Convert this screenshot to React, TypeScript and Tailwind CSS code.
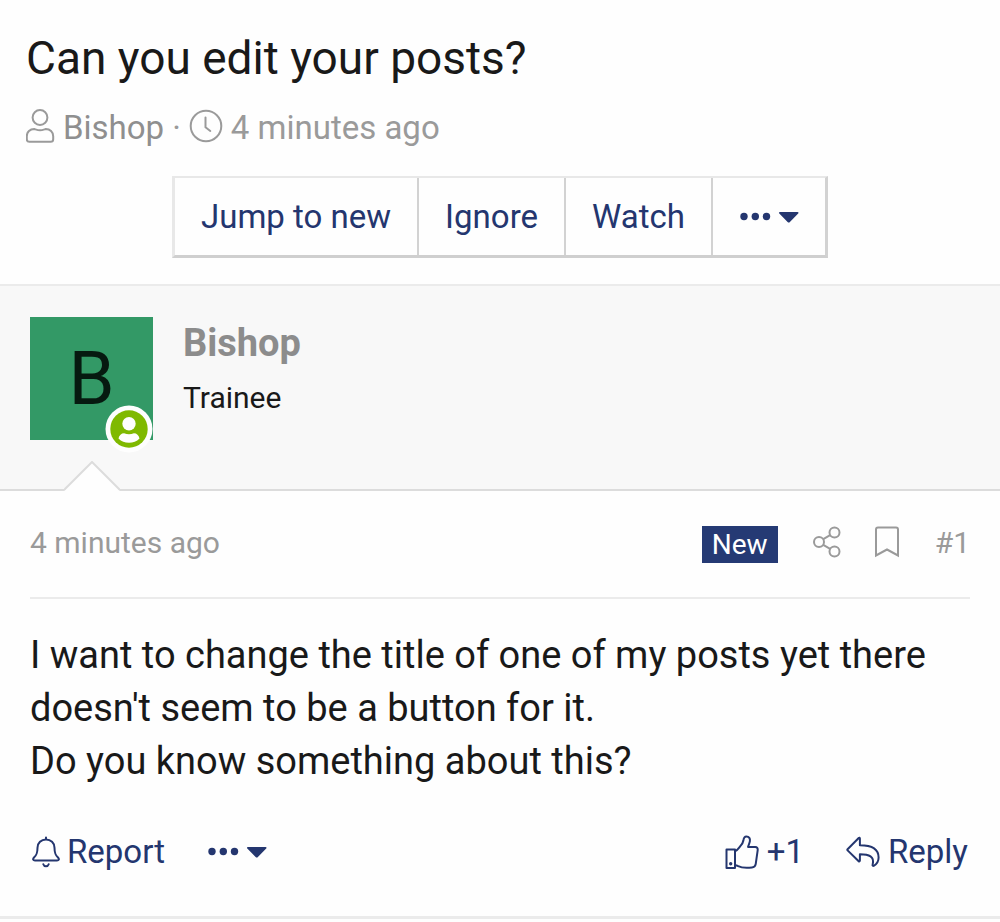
import React from 'react';

type IconProps = { className?: string };

function UserIcon({ className }: IconProps) {
  return (
    <svg className={className} viewBox="0 0 29 35" fill="none" stroke="currentColor" strokeWidth="2" aria-hidden="true">
      <circle cx="14" cy="8.500" r="7.400" />
      <path d="M8.200 20c2 .6 3.600 1.300 5.800 1.300s3.800-.7 5.800-1.300c4.200 0 7.400 3 7.400 7.200v3.100c0 1.500-1 2.500-2.500 2.500H3.300c-1.500 0-2.500-1-2.500-2.500v-3.100C.8 23 4 20 8.200 20z" />
    </svg>
  );
}

function ClockIcon({ className }: IconProps) {
  return (
    <svg className={className} viewBox="0 0 34 34" fill="none" stroke="currentColor" strokeWidth="2" aria-hidden="true">
      <circle cx="17" cy="17" r="15.300" />
      <path d="M16.500 8.500v9.800l4.800 3.700" strokeLinecap="round" strokeLinejoin="round" />
    </svg>
  );
}

function MoreIcon({ className }: IconProps) {
  return (
    <svg className={className} viewBox="0 0 60 14" fill="currentColor" aria-hidden="true">
      <circle cx="5" cy="6.500" r="3.700" />
      <circle cx="16.300" cy="6.500" r="3.700" />
      <circle cx="27.500" cy="6.500" r="3.700" />
      <path d="M41 2h17.500c1 0 1.400 .9 .7 1.600l-8.300 8.300c-.7 .7-1.600 .7-2.300 0l-8.300-8.300c-.7-.7-.3-1.600 .7-1.600z" />
    </svg>
  );
}

function OnlineIcon({ className }: IconProps) {
  return (
    <svg className={className} viewBox="0 0 48 48" aria-hidden="true">
      <circle cx="24" cy="24" r="23.500" fill="#fefefe" />
      <circle cx="24" cy="24" r="18.700" fill="#7fb900" />
      <circle cx="24" cy="18.800" r="6.700" fill="#fefefe" />
      <path d="M13.500 33.500c.7-3.300 2.800-5.300 5.600-5.300 1.600 .7 3.200 1 4.900 1s3.300-.3 4.900-1c2.800 0 4.900 2 5.600 5.300-2.800 3-6.400 4.300-10.500 4.300s-7.700-1.300-10.500-4.300z" fill="#fefefe" />
    </svg>
  );
}

function ShareIcon({ className }: IconProps) {
  return (
    <svg className={className} viewBox="0 0 30 32" fill="none" stroke="currentColor" strokeWidth="2" aria-hidden="true">
      <circle cx="7" cy="16" r="5" />
      <circle cx="22.500" cy="6.500" r="5" />
      <circle cx="22.500" cy="25.500" r="5" />
      <path d="M11.300 13.200l6.800-4M11.300 18.800l6.800 4" />
    </svg>
  );
}

function BookmarkIcon({ className }: IconProps) {
  return (
    <svg className={className} viewBox="0 0 24 32" fill="none" stroke="currentColor" strokeWidth="2" aria-hidden="true">
      <path d="M1 29.500V3.500C1 2.300 1.800 1.500 3 1.500h18c1.200 0 2 .8 2 2v26l-11-6z" />
    </svg>
  );
}

function BellIcon({ className }: IconProps) {
  return (
    <svg className={className} viewBox="0 0 28 32" fill="none" stroke="currentColor" strokeWidth="2" strokeLinecap="round" strokeLinejoin="round" aria-hidden="true">
      <path d="M14 1.600v1.800M14 3.400c-4.800 0-8.500 3.600-8.500 8.300 0 6-1.200 7.600-3.500 9.800-1.600 1.700-.8 3 1 3h22c1.800 0 2.600-1.300 1-3-2.300-2.200-3.500-3.800-3.500-9.800 0-4.700-3.700-8.300-8.500-8.300z" />
      <path d="M11.300 28.300c.4 1.300 1.400 2 2.700 2s2.300-.7 2.700-2" />
    </svg>
  );
}

function ThumbsUpIcon({ className }: IconProps) {
  return (
    <svg className={className} viewBox="0 0 34 35" fill="none" stroke="currentColor" strokeWidth="2" strokeLinejoin="round" aria-hidden="true">
      <path d="M1.500 14.500h8.500v18.500H1.500z" />
      <path d="M10 16.200c2.400-.6 3.700-3 5.300-5 1.700-1.900 2.700-3.300 3.100-5.700 .3-2.500 .9-4 3-4 2.800 0 3.900 2 3.500 4.700-.3 2.200-1.400 3.700-1.900 5.700h7.300c1.700 0 2.700 1.500 2.400 3.200l-2 14c-.4 2.200-1.500 3.300-3.700 3.300-6.400 .700-11 .200-13.800-1.300-1-.6-2-.9-3.200-.9" />
      <circle cx="5.700" cy="28.700" r=".7" fill="currentColor" />
    </svg>
  );
}

function ReplyIcon({ className }: IconProps) {
  return (
    <svg className={className} viewBox="0 0 34 32" fill="none" stroke="currentColor" strokeWidth="2" strokeLinejoin="round" aria-hidden="true">
      <path d="M1.600 13.200L12.700 2c.5-.5 1.200-.3 1.200 .6v6.600c10.700 0 18.700 3.300 18.700 12.300 0 3.200-1.700 6.300-4.600 8.300-.9 .6-1.700-.1-1.400-1.100 2.300-8.300-3.600-10.300-12.700-10.400v6.300c0 .9-.7 1.100-1.200 .6L1.600 14.400c-.4-.4-.4-.8 0-1.200z" />
    </svg>
  );
}

const threadActions = ['Jump to new', 'Ignore', 'Watch'];

export default function App() {
  return (
    <main className="bg-[#fefefe] font-[Roboto,sans-serif] text-[#191919]">
      {/* Thread header */}
      <header className="px-[26px] pt-8 pb-[26px]">
        <h1 className="text-[46px] leading-[52px]">Can you edit your posts?</h1>
        <div className="mt-[25px] flex items-start text-[33px] leading-[38px] text-[#9a9a9a]">
          <UserIcon className="h-[35px] w-[29px]" />
          <a href="#bishop" className="ml-2 text-[#8f8f8f]">Bishop</a>
          <span className="mx-2">·</span>
          <ClockIcon className="h-[34px] w-[34px]" />
          <time className="ml-2">4 minutes ago</time>
        </div>
        <div className="mt-[29px] flex justify-center">
          <div className="flex h-[82px] border-t-2 border-r-[3px] border-b-[3px] border-l-[3px] border-t-[#e8e8e8] border-r-[#d2d2d2] border-b-[#cfcfcf] border-l-[#e8e8e8] text-[33px] text-[#24366f]">
            {threadActions.map((label) => (
              <button key={label} type="button" className="border-r-2 border-[#d2d2d2] px-[26px]">
                {label}
              </button>
            ))}
            <button type="button" aria-label="More options" className="px-[26px]">
              <MoreIcon className="h-[14px] w-[60px]" />
            </button>
          </div>
        </div>
      </header>

      <article>
        {/* Author */}
        <section className="relative flex h-[207px] gap-[30px] border-t-2 border-b-2 border-t-[#ebebeb] border-b-[#dcdcdc] bg-[#f8f8f8] px-[30px] pt-[31px]">
          <div className="relative flex h-[123px] w-[123px] items-center justify-center bg-[#339966] text-[74px] leading-none text-[#061a10]">
            B
            <OnlineIcon className="absolute right-0 -bottom-[13px] h-12 w-12" />
          </div>
          <div>
            <h2 className="text-[38px] leading-[52px] font-bold text-[#8c8c8c]">
              <a href="#bishop">Bishop</a>
            </h2>
            <p className="mt-[11px] text-[30px] leading-[36px]">Trainee</p>
          </div>
          <svg className="absolute -bottom-[2px] left-16 h-[30px] w-[56px]" viewBox="0 0 56 30" aria-hidden="true">
            <path d="M0 30L28 2l28 28z" fill="#fefefe" />
            <path d="M0 29L28 1l28 28" fill="none" stroke="#dcdcdc" strokeWidth="2" />
          </svg>
        </section>

        {/* Post */}
        <div className="px-[30px]">
          <div className="flex h-[108px] items-center justify-between border-b-2 border-[#ebebeb] pb-1 text-[30px] text-[#9a9a9a]">
            <time>4 minutes ago</time>
            <div className="flex items-center">
              <span className="mt-1 bg-[#253a74] px-[10px] text-[28px] leading-[37px] text-white">New</span>
              <button type="button" aria-label="Share" className="ml-[34px]">
                <ShareIcon className="h-8 w-[30px]" />
              </button>
              <button type="button" aria-label="Bookmark" className="ml-[33px]">
                <BookmarkIcon className="h-8 w-6" />
              </button>
              <a href="#post-1" className="ml-9">#1</a>
            </div>
          </div>

          <p className="mt-[30px] text-[38px] leading-[53px]">
            I want to change the title of one of my posts yet there doesn't seem to be a button for it.
            <br />
            Do you know something about this?
          </p>

          <div className="mt-[42px] flex h-[44px] items-center justify-between text-[33px] text-[#24366f]">
            <div className="flex items-center">
              <a href="#report" className="ml-[2px] flex items-center gap-[7px]">
                <BellIcon className="h-8 w-7" />
                Report
              </a>
              <button type="button" aria-label="More post options" className="ml-[42px]">
                <MoreIcon className="h-[14px] w-[60px]" />
              </button>
            </div>
            <div className="flex items-center gap-[42px]">
              <button type="button" className="flex items-center gap-2">
                <ThumbsUpIcon className="h-[35px] w-[34px]" />
                +1
              </button>
              <a href="#reply" className="mr-[2px] flex items-center gap-2">
                <ReplyIcon className="h-8 w-[34px]" />
                Reply
              </a>
            </div>
          </div>
        </div>
        <div className="mt-[42px] h-[6px] border-t-[3px] border-[#ebebeb]" />
      </article>
    </main>
  );
}
